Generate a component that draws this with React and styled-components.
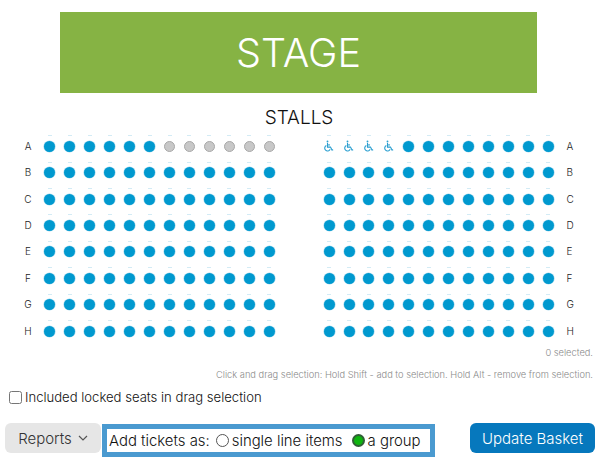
import React from "react";
import styled, { createGlobalStyle } from "styled-components";

const GlobalStyle = createGlobalStyle`
    html, body {
        margin: 0;
        padding: 0;
        background: #fff;
        font-family: 'Inter', sans-serif;
        color: #222;
    }
`;

const Page = styled.div`
    width: 607px;
    height: 465px;
    overflow: hidden;
    padding-top: 12px;
    box-sizing: border-box;
`;

const Stage = styled.div`
    width: 477px;
    height: 81px;
    margin-left: 60px;
    background-color: #86b344;
    color: #fff;
    display: flex;
    align-items: center;
    justify-content: center;
    font-size: 39.5px;
    font-weight: 300;
`;

const SectionTitle = styled.div`
    margin: 13px 0 0 -9px;
    height: 24px;
    line-height: 24px;
    text-align: center;
    font-size: 19px;
    font-weight: 300;
    color: #111;
`;

const SeatMap = styled.div`
    margin-top: 3px;
    padding-left: 20px;
`;

const SeatRow = styled.div`
    display: flex;
    align-items: center;
    height: 26.43px;
`;

const RowLabel = styled.div`
    width: 20px;
    font-size: 10px;
    font-weight: 300;
    text-align: ${(props) => (props.right ? "left" : "center")};
    padding-left: ${(props) => (props.right ? "10px" : "0")};
    margin-left: -2px;
    margin-right: 2px;
    margin-top: -1px;
    color: #222;
`;

const SeatBlock = styled.div`
    display: flex;
    width: 239.2px;
    margin-left: ${(props) => (props.second ? "40px" : "0")};
`;

const SeatCell = styled.div`
    position: relative;
    width: 19.93px;
    height: 20px;
    display: flex;
    align-items: center;
    justify-content: center;

    &::before {
        content: "";
        position: absolute;
        top: -1px;
        left: 8px;
        width: 4px;
        height: 1px;
        background: #d3ebf5;
    }
`;

const Dot = styled.div`
    width: 11px;
    height: 11px;
    border-radius: 50%;
    box-sizing: border-box;
    background: ${(props) => (props.locked ? "#c8c8c8" : "#0099cf")};
    border: ${(props) => (props.locked ? "1px solid #a8a8a8" : "none")};
    box-shadow: ${(props) => (props.locked ? "none" : "0 0 0 .6px #a9daee")};
`;

const WheelchairIcon = () => (
    <svg width="10" height="12.5" viewBox="0 0 12 14" fill="none" stroke="#2a9fd0" strokeWidth="1.3">
        <circle cx="4.2" cy="1.3" r="1.1" fill="#2a9fd0" stroke="none" />
        <path d="M4.2 3v5h3.6l1.8 3.6 1.4-.5" />
        <path d="M4.2 5.4h3" />
        <path d="M2.8 6.2a3.4 3.4 0 1 0 4.6 4.4" />
    </svg>
);

const SelectionNote = styled.div`
    margin: ${(props) => props.top}px 14px 0 0;
    text-align: right;
    font-size: 9.3px;
    line-height: 12px;
    font-weight: 300;
    color: #8a8a8a;
`;

const LockRow = styled.label`
    display: flex;
    align-items: center;
    margin: 7px 0 0 9px;
    height: 18px;
    font-size: 13.1px;
    font-weight: 300;
    color: #111;
`;

const Checkbox = styled.input`
    width: 13px;
    height: 13px;
    margin: 0 3px 0 0;
`;

const Footer = styled.div`
    display: flex;
    align-items: flex-start;
    margin: 17px 0 0 5px;
`;

const ReportsButton = styled.button`
    display: flex;
    align-items: center;
    justify-content: center;
    gap: 6px;
    width: 96px;
    height: 30px;
    border: none;
    border-radius: 6px;
    background: #e6e6e6;
    color: #333;
    font-family: inherit;
    font-size: 15px;
    font-weight: 300;
    padding: 0;
`;

const TicketMode = styled.div`
    display: flex;
    align-items: center;
    width: 333px;
    height: 33px;
    margin: 1px 0 0 1px;
    box-sizing: border-box;
    border: 5px solid #4a9ad0;
    padding-left: 2px;
    font-size: 14.9px;
    font-weight: 300;
    color: #111;
`;

const Radio = styled.span`
    width: 13px;
    height: 13px;
    margin-left: ${(props) => props.offset}px;
    margin-right: 3px;
    border-radius: 50%;
    box-sizing: border-box;
    border: ${(props) => (props.checked ? "2px solid #2f5f35" : "1px solid #555")};
    background: ${(props) => (props.checked ? "#0fb50f" : "#fff")};
`;

const UpdateButton = styled.button`
    width: 125px;
    height: 30px;
    margin-left: 35px;
    border: none;
    border-radius: 6px;
    background: #0678bd;
    color: #fff;
    font-family: inherit;
    font-size: 15px;
    font-weight: 300;
    padding: 0;
`;

const rows = ["A", "B", "C", "D", "E", "F", "G", "H"];
const seatIds = Array.from({ length: 12 }, (_, i) => i);

export default function App() {
    return (
        <Page>
            <GlobalStyle />
            <Stage>STAGE</Stage>
            <SectionTitle>STALLS</SectionTitle>
            <SeatMap>
                {rows.map((row) => (
                    <SeatRow key={row}>
                        <RowLabel>{row}</RowLabel>
                        <SeatBlock>
                            {seatIds.map((i) => (
                                <SeatCell key={i}>
                                    <Dot locked={row === "A" && i > 5} />
                                </SeatCell>
                            ))}
                        </SeatBlock>
                        <SeatBlock second>
                            {seatIds.map((i) => (
                                <SeatCell key={i}>
                                    {row === "A" && i < 4 ? <WheelchairIcon /> : <Dot />}
                                </SeatCell>
                            ))}
                        </SeatBlock>
                        <RowLabel right>{row}</RowLabel>
                    </SeatRow>
                ))}
            </SeatMap>
            <SelectionNote top={3}>0 selected.</SelectionNote>
            <SelectionNote top={10}>
                Click and drag selection: Hold Shift - add to selection. Hold Alt - remove from selection.
            </SelectionNote>
            <LockRow>
                <Checkbox type="checkbox" />
                Included locked seats in drag selection
            </LockRow>
            <Footer>
                <ReportsButton>
                    Reports
                    <svg width="10" height="6" viewBox="0 0 10 6" fill="none" stroke="#555" strokeWidth="1.2">
                        <path d="M1 1l4 4 4-4" />
                    </svg>
                </ReportsButton>
                <TicketMode>
                    Add tickets as:
                    <Radio offset={6} />
                    single line items
                    <Radio offset={9} checked />
                    a group
                </TicketMode>
                <UpdateButton>Update Basket</UpdateButton>
            </Footer>
        </Page>
    );
}
